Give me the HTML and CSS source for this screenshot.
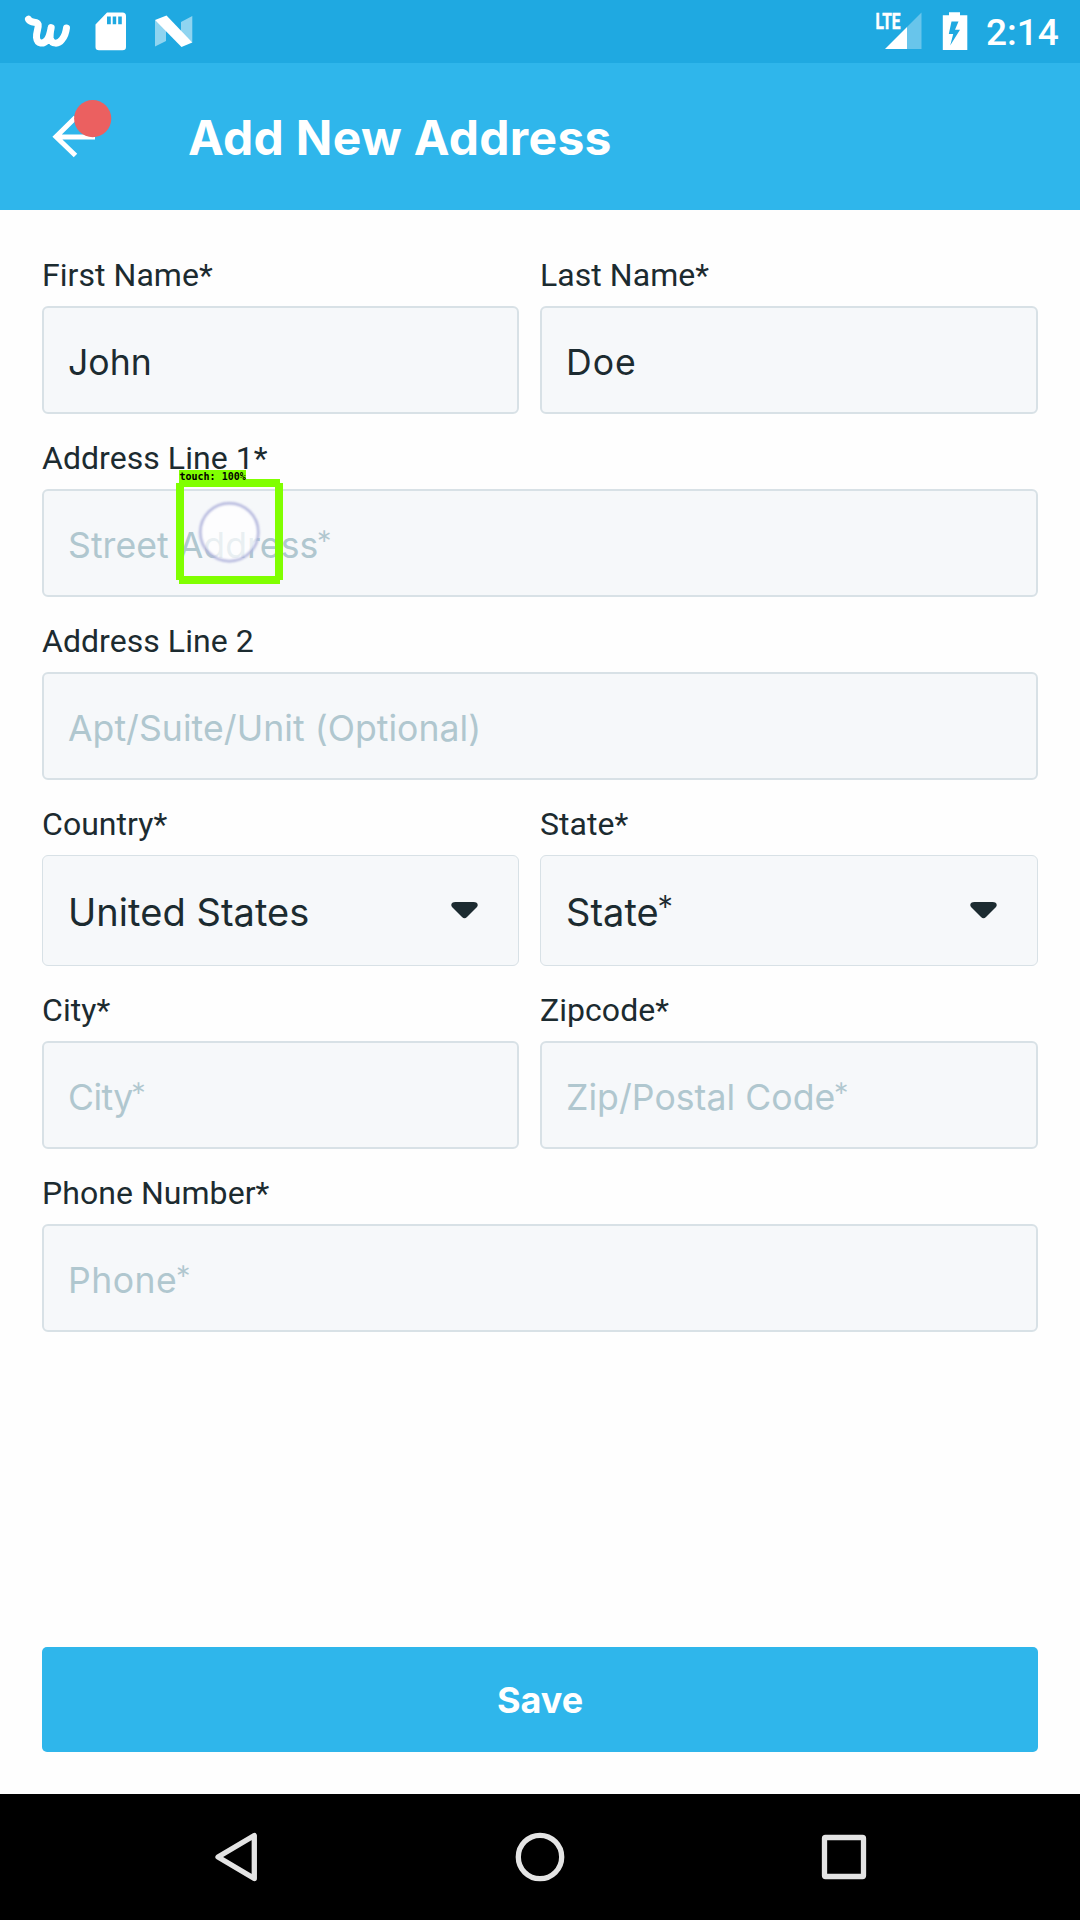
FILE: index.html
```
<!DOCTYPE html>
<html lang="en">
<head>
<meta charset="utf-8">
<title>Add New Address</title>
<link rel="stylesheet" href="styles.css">
</head>
<body>
<div class="screen">
  <div class="status-bar">
    <svg class="status-left" width="200" height="63" viewBox="0 0 200 63">
      <path class="wish" d="M28.500 19.300C31.500 24 37 20.500 38.200 24.500C38.800 28 36 32.500 36.500 37.500C37.200 44.300 43.500 44.500 47 40C49.500 37 50.400 32 51.200 27.600C50.400 31.500 49.600 35 50.300 38.500C51.800 44.500 58.500 44.500 62 39.500C65 36 66 32 66.500 27.900"/>
      <path class="solid" d="M107 12.5H122.5Q126 12.5 126 16V47Q126 50.3 122.5 50.3H99Q95.5 50.3 95.5 47V24.5ZM107 16.5V24.2H110.8V16.5ZM112.7 16.5V24.2H116.2V16.5ZM118.2 16.5V24.2H121.8V16.5Z" fill-rule="evenodd"/>
      <path class="leaf" d="M155 20L166 28V41L155 46.5ZM181 22L192.3 16V42.5L181 33Z"/>
      <path class="solid" d="M155 20L166.5 15.500L192.3 42.5L181.5 47Z"/>
    </svg>
    <div class="status-right">
      <svg width="110" height="63" viewBox="0 0 110 63">
        <text class="lte" x="5.5" y="29.3" textLength="25" lengthAdjust="spacingAndGlyphs">LTE</text>
        <path class="faint" d="M37 27L51.5 12.5V49H37Z"/>
        <path class="solid" d="M15 49L37 27V49Z"/>
        <path class="solid" fill-rule="evenodd" d="M79 12.3H90V15.2H97.3V50H72.8V15.2H79ZM81.5 21.5L78.8 34H83.2L80.2 45.5L90 29.8H85L88.5 21.5Z"/>
      </svg>
      <span class="clock">2:14</span>
    </div>
  </div>

  <header class="app-bar">
    <svg class="back" width="100" height="60" viewBox="0 0 100 60">
      <path class="arrow" d="M35.5 17.5L16 36.7L35.5 55.5M17 36.9H55"/>
      <circle class="badge" cx="52.7" cy="18.6" r="18.6"/>
    </svg>
    <h1 class="title">Add New Address</h1>
  </header>

  <main class="form">
    <div class="row">
      <div class="field"><div class="label">First Name*</div><div class="box"><span>John</span></div></div>
      <div class="field"><div class="label">Last Name*</div><div class="box"><span class="roomy">Doe</span></div></div>
    </div>
    <div class="row single">
      <div class="field">
        <div class="label">Address Line 1*</div>
        <div class="box hint"><span>Street Address<span class="star">*</span></span></div>
        <svg class="touch" width="107" height="114" viewBox="0 0 107 114">
          <defs><filter id="soft" x="-20%" y="-20%" width="140%" height="140%"><feGaussianBlur stdDeviation="1.1"/></filter></defs>
          <circle class="touch-fill" cx="53.3" cy="62.2" r="28.5"/>
          <circle class="touch-ring" cx="53.3" cy="62.2" r="29" filter="url(#soft)"/>
          <path class="touch-box" d="M3 0H70V9H104V13H107V110H104V114H3V110H0V13H3ZM8 17V106H99V17Z" fill-rule="evenodd"/>
          <text class="touch-text" x="3.5" y="10">touch: 100%</text>
        </svg>
      </div>
    </div>
    <div class="row single">
      <div class="field"><div class="label">Address Line 2</div><div class="box hint"><span>Apt/Suite/Unit (Optional)</span></div></div>
    </div>
    <div class="row">
      <div class="field"><div class="label">Country*</div><div class="box select"><span>United States</span>
        <svg width="27" height="17" viewBox="0 0 27 17"><path class="caret" d="M4.5 0H22.5C26.5 0 28 3 25.5 5.5L16 15Q13.500 17.500 11 15L1.500 5.500C-1 3 .5 0 4.500 0Z"/></svg></div></div>
      <div class="field"><div class="label">State*</div><div class="box select"><span>State<span class="star">*</span></span>
        <svg width="27" height="17" viewBox="0 0 27 17"><path class="caret" d="M4.5 0H22.5C26.5 0 28 3 25.5 5.5L16 15Q13.500 17.500 11 15L1.500 5.500C-1 3 .5 0 4.500 0Z"/></svg></div></div>
    </div>
    <div class="row">
      <div class="field"><div class="label">City*</div><div class="box hint"><span class="snug">City<span class="star">*</span></span></div></div>
      <div class="field"><div class="label">Zipcode*</div><div class="box hint"><span>Zip/Postal Code<span class="star">*</span></span></div></div>
    </div>
    <div class="row single">
      <div class="field"><div class="label">Phone Number*</div><div class="box hint"><span class="phone">Phone<span class="star">*</span></span></div></div>
    </div>
    <div class="save">Save</div>
  </main>

  <nav class="nav-bar">
    <svg width="60" height="60" viewBox="0 0 60 60"><path d="M48.300 8.500V51.500L12 30Z"/></svg>
    <svg width="60" height="60" viewBox="0 0 60 60"><circle cx="30" cy="30" r="21.700"/></svg>
    <svg width="60" height="60" viewBox="0 0 60 60"><rect x="10.500" y="10.500" width="39" height="39" rx="1"/></svg>
  </nav>
</div>
</body>
</html>
```
FILE: styles.css
```
* { box-sizing: border-box; }
body { margin: 0; }
.screen {
  width: 1080px;
  height: 1920px;
  display: flex;
  flex-direction: column;
  background: #fefefe;
  color: #1c2b30;
  font-family: Inter, sans-serif;
  overflow: hidden;
}
svg { display: block; flex: none; }

.status-bar {
  height: 63px;
  background: #1fa9e1;
  display: flex;
  justify-content: space-between;
}
.status-right { display: flex; width: 210px; }
.solid { fill: #fff; }
.faint { fill: #fff; fill-opacity: .33; }
.leaf { fill: #fff; fill-opacity: .5; }
.wish { fill: none; stroke: #fff; stroke-width: 7; stroke-linejoin: round; stroke-linecap: round; }
.lte { fill: #fff; stroke: #fff; stroke-width: .5; font: 700 22px Roboto, sans-serif; }
.clock {
  color: #fff;
  font: 500 37px/63px Roboto, sans-serif;
  padding: 1px 0 0 6px;
}

.app-bar {
  height: 147px;
  background: #2fb6eb;
  display: flex;
  align-items: center;
  padding-left: 40px;
}
.back { margin-bottom: 13px; }
.arrow { fill: none; stroke: #fff; stroke-width: 5; }
.badge { fill: #eb6060; }
.title {
  margin: 0 0 0 48px;
  padding-top: 1px;
  color: #fff;
  font-size: 48px;
  font-weight: 700;
  letter-spacing: .3px;
}

.form {
  flex: 1;
  display: flex;
  flex-direction: column;
  padding: 21px 42px 42px;
}
.row {
  display: grid;
  grid-template-columns: 477px 498px;
  gap: 21px;
}
.single { grid-template-columns: 1fr; }
.field { position: relative; }
.label {
  height: 75px;
  padding-top: 25px;
  font: 400 32px/38px Roboto, sans-serif;
  letter-spacing: .05px;
}
.box {
  height: 108px;
  display: flex;
  align-items: center;
  padding: 4px 0 0 24px;
  background: #f6f8fa;
  border: 2px solid #d8e1e6;
  border-radius: 6px;
  font-size: 35.600px;
  letter-spacing: .05px;
  white-space: pre;
}
.hint { color: #b0c7cf; }
.roomy { letter-spacing: 1px; }
.snug { letter-spacing: -.6px; }
.phone { letter-spacing: .5px; }
.star { margin-left: -2px; font-family: Lato, sans-serif; font-size: 1.050em; line-height: 1; }
.select {
  height: 111px;
  padding: 2px 40px 0 25px;
  border-width: 1px;
  justify-content: space-between;
  font-size: 38px;
  letter-spacing: .05px;
}
.select svg { margin-bottom: 3px; }
.caret { fill: #1c2b30; }

.touch { position: absolute; left: 134px; top: 56px; }
.touch-fill { fill: #fff; fill-opacity: .72; }
.touch-ring { fill: none; stroke: #b3b6dd; stroke-width: 2.500; }
.touch-box { fill: #80ff00; }
.touch-text { fill: #000; font: 700 10px "DejaVu Sans Mono", monospace; }

.save {
  margin-top: auto;
  height: 105px;
  border-radius: 5px;
  background: #2fb6eb;
  color: #fff;
  font-size: 36px;
  font-weight: 700;
  line-height: 106px;
  text-align: center;
}

.nav-bar {
  height: 126px;
  background: #000;
  display: flex;
  align-items: center;
  justify-content: center;
  gap: 244px;
}
.nav-bar svg { fill: none; stroke: #e4e4e4; stroke-width: 5.300; stroke-linejoin: round; }
```
